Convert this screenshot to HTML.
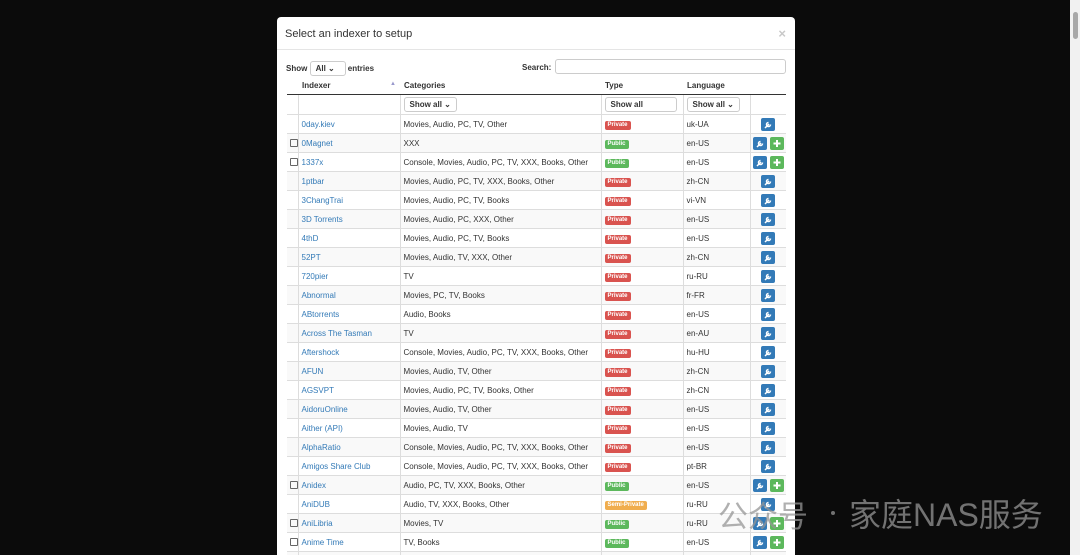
<!DOCTYPE html>
<html style="height:555px;overflow:hidden"><head><meta charset="utf-8"><style>
*{box-sizing:border-box}
body{margin:0;width:1080px;height:555px;overflow:hidden;background:#0b0b0b;font-family:"Liberation Sans",Arial,sans-serif;position:relative}
.sb{position:absolute;left:1070px;top:0;width:10px;height:555px;background:#f1f1f1}
.sb .th{position:absolute;left:3px;top:12px;width:5px;height:27px;background:#a8a8a8;border-radius:3px}
.modal{position:absolute;left:277px;top:17px;width:518px;height:538px;background:#fff;border-radius:4px 4px 0 0;overflow:hidden}
.hd{height:33px;border-bottom:1px solid #e5e5e5;padding:11px 8px;font-size:11px;color:#333}
.x{position:absolute;right:9px;top:9px;color:#c8c8c8;font-size:13px;font-weight:bold}
.ctl{position:absolute;font-size:8px;font-weight:bold;color:#333}
.sel{display:inline-block;border:1px solid #ccc;border-radius:3px;height:15px;line-height:13px;padding:0 5px;font-size:8px;font-weight:bold;color:#333;background:#fff}
table{position:absolute;left:10px;top:61px;width:499px;border-collapse:collapse;table-layout:fixed;font-size:8px;color:#333}
th{text-align:left;height:16px;padding:0 4px;font-size:8px;border-bottom:1px solid #333}
td{height:19px;padding:0 3px;border-top:1px solid #ddd;white-space:nowrap;overflow:hidden}
tr.f td{border-top:none;height:20px}
tbody tr:nth-child(even) td{background:#f9f9f9}
td+td{border-left:1px solid #ddd}
a{color:#337ab7;text-decoration:none}
.l{display:inline-block;color:#fff;font-size:6px;font-weight:bold;padding:1px 3px;border-radius:2px;line-height:7px}
.pr{background:#d9534f}.pu{background:#5cb85c}.se{background:#f0ad4e}
.cb{display:inline-block;width:8px;height:8px;border:1px solid #666;border-radius:1px;vertical-align:middle}
.b{display:inline-block;width:14px;height:13px;border-radius:2px;vertical-align:middle;position:relative}
.w{background:#337ab7}.g{background:#5cb85c;margin-left:3px}
.b svg{position:absolute;left:3px;top:2px}
.ac{text-align:center;padding:0}
.wm{position:absolute;top:492px;font-family:"Liberation Sans","Noto Sans CJK SC",sans-serif;font-size:30px;color:rgba(150,150,150,.75);white-space:nowrap}
.dot{position:absolute;left:831px;top:511px;width:4px;height:4px;border-radius:2px;background:rgba(150,150,150,.75)}
</style></head><body>
<div class="sb"><div class="th"></div></div>
<div class="modal">
<div class="hd">Select an indexer to setup</div><div class="x">×</div>
<div class="ctl" style="left:9px;top:44px">Show <span class="sel" style="width:36px">All &#8964;</span> entries</div>
<div class="ctl" style="left:245px;top:46px">Search:</div>
<div style="position:absolute;left:278px;top:42px;width:231px;height:15px;border:1px solid #ccc;border-radius:3px"></div>
<table>
<colgroup><col style="width:11px"><col style="width:102px"><col style="width:201px"><col style="width:82px"><col style="width:67px"><col style="width:36px"></colgroup>
<thead><tr><th></th><th>Indexer <span style="float:right;color:#99c;font-size:6px">▲</span></th><th>Categories</th><th>Type</th><th>Language</th><th></th></tr></thead>
<tbody>
<tr class="f"><td></td><td></td><td><span class="sel">Show all &#8964;</span></td><td><span class="sel" style="width:72px">Show all</span></td><td><span class="sel">Show all &#8964;</span></td><td></td></tr>
</tbody>
</table>
<table style="top:97px" id="t">
<colgroup><col style="width:11px"><col style="width:102px"><col style="width:201px"><col style="width:82px"><col style="width:67px"><col style="width:36px"></colgroup>
<tbody id="tb"></tbody></table>
</div>
<div class="wm" style="left:718px">公众号</div>
<div class="dot"></div>
<div class="wm" style="left:849px;font-size:32px;top:490px">家庭NAS服务</div>
<script>
var W='<span class="b w"><svg width="8" height="9" viewBox="0 0 8 9"><path d="M1 8L5 4M4.5 2.5a2 2 0 1 0 2 2" stroke="#fff" stroke-width="1.5" fill="none"/></svg></span>';
var G='<span class="b g"><svg width="8" height="9" viewBox="0 0 8 9"><path d="M4 1v7M0.5 4.5h7" stroke="#fff" stroke-width="2"/></svg></span>';
var C8="Console, Movies, Audio, PC, TV, XXX, Books, Other";
var d=[["0day.kiev","Movies, Audio, PC, TV, Other","pr","uk-UA",0],["0Magnet","XXX","pu","en-US",1],["1337x",C8,"pu","en-US",1],["1ptbar","Movies, Audio, PC, TV, XXX, Books, Other","pr","zh-CN",0],["3ChangTrai","Movies, Audio, PC, TV, Books","pr","vi-VN",0],["3D Torrents","Movies, Audio, PC, XXX, Other","pr","en-US",0],["4thD","Movies, Audio, PC, TV, Books","pr","en-US",0],["52PT","Movies, Audio, TV, XXX, Other","pr","zh-CN",0],["720pier","TV","pr","ru-RU",0],["Abnormal","Movies, PC, TV, Books","pr","fr-FR",0],["ABtorrents","Audio, Books","pr","en-US",0],["Across The Tasman","TV","pr","en-AU",0],["Aftershock",C8,"pr","hu-HU",0],["AFUN","Movies, Audio, TV, Other","pr","zh-CN",0],["AGSVPT","Movies, Audio, PC, TV, Books, Other","pr","zh-CN",0],["AidoruOnline","Movies, Audio, TV, Other","pr","en-US",0],["Aither (API)","Movies, Audio, TV","pr","en-US",0],["AlphaRatio",C8,"pr","en-US",0],["Amigos Share Club",C8,"pr","pt-BR",0],["Anidex","Audio, PC, TV, XXX, Books, Other","pu","en-US",1],["AniDUB","Audio, TV, XXX, Books, Other","se","ru-RU",0],["AniLibria","Movies, TV","pu","ru-RU",1],["Anime Time","TV, Books","pu","en-US",1],["","","","",0]];
var L={pr:"Private",pu:"Public",se:"Semi-Private"},h="";
d.forEach(function(r){h+='<tr><td>'+(r[4]?'<span class="cb"></span>':'')+'</td><td><a>'+r[0]+'</a></td><td>'+r[1]+'</td><td>'+(r[2]?'<span class="l '+r[2]+'">'+L[r[2]]+'</span>':'')+'</td><td>'+r[3]+'</td><td class="ac">'+(r[0]?W+(r[4]?G:''):'')+'</td></tr>';});
document.getElementById('tb').innerHTML=h;
</script>
</body></html>
